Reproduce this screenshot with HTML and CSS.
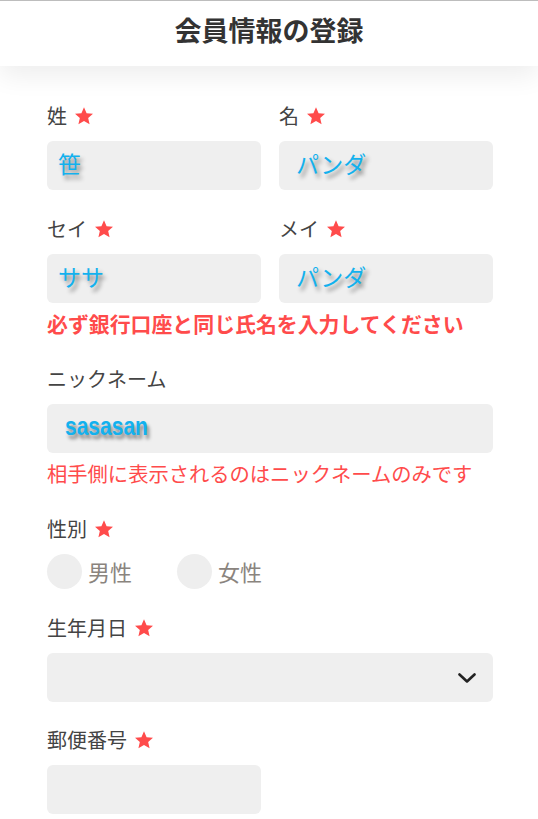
FILE: index.html
```html
<!DOCTYPE html>
<html lang="ja">
<head>
<meta charset="utf-8">
<title>会員情報の登録</title>
<link rel="stylesheet" href="styles.css">
</head>
<body>
<header class="header"><h1 class="title">会員情報の登録</h1></header>
<main class="form">
  <div class="row">
    <div class="field">
      <div class="label">姓<svg class="star" viewBox="0 0 24 24"><path d="M12 1.5l3.1 7.1 7.7.7-5.8 5.1 1.7 7.6L12 18l-6.7 4 1.7-7.6-5.8-5.1 7.7-.7z"/></svg></div>
      <div class="input"><span class="val">笹</span></div>
    </div>
    <div class="field">
      <div class="label">名<svg class="star" viewBox="0 0 24 24"><path d="M12 1.5l3.1 7.1 7.7.7-5.8 5.1 1.7 7.6L12 18l-6.7 4 1.7-7.6-5.8-5.1 7.7-.7z"/></svg></div>
      <div class="input"><span class="val val-pad">パンダ</span></div>
    </div>
  </div>
  <div class="row row-tight">
    <div class="field">
      <div class="label">セイ<svg class="star" viewBox="0 0 24 24"><path d="M12 1.5l3.1 7.1 7.7.7-5.8 5.1 1.7 7.6L12 18l-6.7 4 1.7-7.6-5.8-5.1 7.7-.7z"/></svg></div>
      <div class="input"><span class="val">ササ</span></div>
    </div>
    <div class="field">
      <div class="label">メイ<svg class="star" viewBox="0 0 24 24"><path d="M12 1.5l3.1 7.1 7.7.7-5.8 5.1 1.7 7.6L12 18l-6.7 4 1.7-7.6-5.8-5.1 7.7-.7z"/></svg></div>
      <div class="input"><span class="val val-pad">パンダ</span></div>
    </div>
  </div>
  <p class="note note-bold">必ず銀行口座と同じ氏名を入力してください</p>

  <div class="field field-tight">
    <div class="label">ニックネーム</div>
    <div class="input"><span class="val val-nick">sasasan</span></div>
  </div>
  <p class="note">相手側に表示されるのはニックネームのみです</p>

  <div class="field">
    <div class="label">性別<svg class="star" viewBox="0 0 24 24"><path d="M12 1.5l3.1 7.1 7.7.7-5.8 5.1 1.7 7.6L12 18l-6.7 4 1.7-7.6-5.8-5.1 7.7-.7z"/></svg></div>
    <div class="radios">
      <label class="radio"><span class="dot"></span><span class="radio-text">男性</span></label>
      <label class="radio"><span class="dot"></span><span class="radio-text">女性</span></label>
    </div>
  </div>

  <div class="field field-select">
    <div class="label">生年月日<svg class="star" viewBox="0 0 24 24"><path d="M12 1.5l3.1 7.1 7.7.7-5.8 5.1 1.7 7.6L12 18l-6.7 4 1.7-7.6-5.8-5.1 7.7-.7z"/></svg></div>
    <div class="input select"><svg class="chev" viewBox="0 0 18 10"><path d="M1.5 1.5l7.5 7 7.5-7"/></svg></div>
  </div>

  <div class="field">
    <div class="label">郵便番号<svg class="star" viewBox="0 0 24 24"><path d="M12 1.5l3.1 7.1 7.7.7-5.8 5.1 1.7 7.6L12 18l-6.7 4 1.7-7.6-5.8-5.1 7.7-.7z"/></svg></div>
    <div class="input input-half"></div>
  </div>
</main>
</body>
</html>
```
FILE: styles.css
```css
* { box-sizing: border-box; }
html, body { margin: 0; padding: 0; background: #fff; }
body {
  font-family: "Noto Sans CJK JP", "Noto Sans", sans-serif;
  color: #444;
  width: 538px;
  overflow: hidden;
}
.header {
  height: 66px;
  border-top: 1px solid #bdbdbd;
  display: flex;
  align-items: center;
  justify-content: center;
  box-shadow: 0 10px 26px rgba(0,0,0,0.07);
  position: relative;
  background: #fff;
}
.title {
  margin: 0;
  font-size: 27px;
  font-weight: 700;
  color: #333;
  line-height: 1;
  padding-bottom: 9px;
}
.form {
  padding: 35px 45px 0 47px;
}
.row {
  display: flex;
  gap: 18px;
  margin-bottom: 24px;
}
.row-tight { margin-bottom: 0; }
.row .field { flex: 1; margin-bottom: 0; }
.field { margin-bottom: 24px; }
.field-tight { margin-bottom: 0; }
.field-select { margin-bottom: 23px; }
.label {
  display: flex;
  align-items: center;
  font-size: 20px;
  line-height: 30px;
  height: 30px;
  color: #444;
  margin-bottom: 10px;
}
.star {
  width: 20px;
  height: 20px;
  fill: #ff4b4b;
  margin-left: 7px;
}
.input {
  height: 49px;
  background: #efefef;
  border-radius: 6px;
  display: flex;
  align-items: center;
  padding-left: 11px;
}
.val {
  color: #12b1ee;
  font-size: 23px;
  line-height: 1;
  text-shadow: 3px 4px 4px rgba(0,0,0,0.45);
  padding-bottom: 4px;
}
.val-pad { margin-left: 6px; }
.val-nick {
  font-family: "Liberation Sans Narrow", "Liberation Sans", sans-serif;
  font-weight: 700;
  font-size: 25px;
  margin-left: 7px;
  transform: scaleX(0.84);
  transform-origin: left center;
}
.note {
  margin: 5px 0 26px;
  font-size: 20.3px;
  line-height: 30px;
  color: #ff4b4b;
  white-space: nowrap;
}
.note-bold { font-weight: 700; font-size: 20.9px; }
.radios {
  display: flex;
  margin-top: 1px;
}
.radio {
  display: flex;
  align-items: center;
  width: 130px;
}
.dot {
  width: 35px;
  height: 35px;
  border-radius: 50%;
  background: #eeeeee;
}
.radio-text {
  font-size: 22px;
  color: #8a847e;
  margin-left: 6px;
  line-height: 35px;
}
.select {
  justify-content: flex-end;
  padding-right: 17px;
}
.chev {
  width: 18px;
  height: 10px;
  fill: none;
  stroke: #222;
  stroke-width: 2.6;
  stroke-linecap: round;
  stroke-linejoin: round;
}
.input-half { width: 214px; }
```
